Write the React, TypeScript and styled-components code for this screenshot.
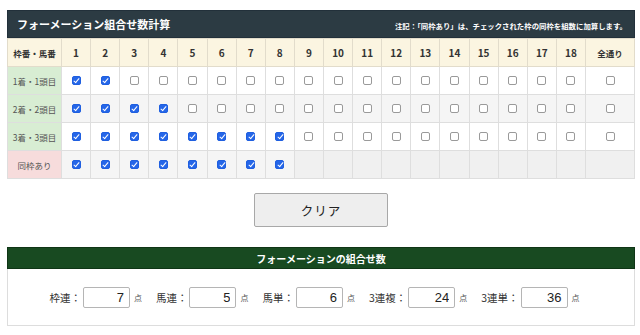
import React, { useState } from 'react';
import styled, { createGlobalStyle } from 'styled-components';

const GlobalStyle = createGlobalStyle`
  html, body {
    margin: 0;
    padding: 0;
    background: #ffffff;
  }
  body {
    font-family: "Noto Sans CJK JP", "Noto Sans", sans-serif;
    color: #333;
  }
`;

const Page = styled.div`
  width: 628px;
  padding: 10px 0 0 7px;
`;

const TitleBar = styled.div`
  height: 28px;
  box-sizing: border-box;
  background: #2c3b43;
  border: 1px solid #22303a;
  display: flex;
  align-items: center;
  justify-content: space-between;
  padding: 0 7px 0 9px;
  color: #fff;
`;

const Title = styled.h1`
  margin: 0;
  font-size: 11px;
  font-weight: 700;
  letter-spacing: 0;
`;

const Note = styled.span`
  font-size: 7.4px;
  font-weight: 700;
  margin-top: 2px;
`;

const Table = styled.table`
  width: 628px;
  border-collapse: collapse;
  table-layout: fixed;
`;

const HeadCell = styled.th<{ $w?: number }>`
  width: ${p => (p.$w ? `${p.$w}px` : 'auto')};
  height: 27px;
  padding: 0;
  background: #fbf5e1;
  border: 1px solid #e2dccb;
  font-size: ${p => (p.$w ? '8.5px' : '10px')};
  font-weight: 700;
  color: #333;
  text-align: center;
`;

const RowLabel = styled.td<{ $tone: 'green' | 'pink' }>`
  height: 27px;
  padding: 0;
  background: ${p => (p.$tone === 'green' ? '#d8edd3' : '#f7dcdc')};
  border: 1px solid #dedede;
  font-size: 8.5px;
  color: #555;
  text-align: center;
`;

const Cell = styled.td<{ $alt: boolean; $empty?: boolean }>`
  padding: 0;
  background: ${p => (p.$empty ? '#f0f0f0' : p.$alt ? '#f5f5f5' : '#ffffff')};
  border: 1px solid #dedede;
  text-align: center;
  vertical-align: middle;
`;

const Check = styled.input.attrs({ type: 'checkbox' })`
  appearance: none;
  -webkit-appearance: none;
  display: block;
  margin: 0 auto;
  width: 9px;
  height: 9px;
  box-sizing: border-box;
  border-radius: 2px;
  border: 1px solid #9a9a9a;
  background: #fff;
  position: relative;
  cursor: pointer;

  &:checked {
    border-color: #1f5fe0;
    background: #2566e8;
  }
  &:checked::after {
    content: '';
    position: absolute;
    left: 2.5px;
    top: 0px;
    width: 2px;
    height: 5px;
    border: solid #fff;
    border-width: 0 1.5px 1.5px 0;
    transform: rotate(40deg);
  }
`;

const ButtonRow = styled.div`
  display: flex;
  justify-content: center;
  padding: 14px 0 0 0;
`;

const ClearButton = styled.button`
  width: 134px;
  height: 34px;
  background: #eeeeee;
  border: 1px solid #a8a8a8;
  border-radius: 2px;
  font-family: "Noto Sans CJK JP", sans-serif;
  font-size: 12.5px;
  color: #222;
  letter-spacing: 1px;
  cursor: pointer;
`;

const ResultBar = styled.div`
  margin-top: 20px;
  height: 22px;
  background: #184a21;
  border: 1px solid #0f3516;
  box-sizing: border-box;
  color: #fff;
  font-size: 10px;
  font-weight: 700;
  display: flex;
  align-items: center;
  justify-content: center;
`;

const ResultBody = styled.div`
  height: 57px;
  box-sizing: border-box;
  border: 1px solid #dddddd;
  border-top: none;
  display: flex;
  align-items: center;
  justify-content: center;
  gap: 14px;
  padding-right: 13px;
`;

const Group = styled.label`
  display: flex;
  align-items: center;
  font-size: 10.5px;
  color: #333;
`;

const Count = styled.input`
  width: 47px;
  height: 21px;
  box-sizing: border-box;
  margin: 0 4px 0 2px;
  border: 1px solid #b5b5b5;
  border-radius: 2px;
  text-align: right;
  padding: 0 5px 0 0;
  font-family: "Liberation Sans", sans-serif;
  font-size: 13px;
  color: #222;
`;

const Unit = styled.span`
  font-size: 8px;
  color: #555;
`;

const cols = Array.from({ length: 18 }, (_, i) => i + 1);

const rows = [
  { label: '1着・1頭目', tone: 'green' as const, n: 2 },
  { label: '2着・2頭目', tone: 'green' as const, n: 4 },
  { label: '3着・3頭目', tone: 'green' as const, n: 8 },
];

const results = [
  { label: '枠連：', value: 7 },
  { label: '馬連：', value: 5 },
  { label: '馬単：', value: 6 },
  { label: '3連複：', value: 24 },
  { label: '3連単：', value: 36 },
];

export default function App() {
  const [grid, setGrid] = useState(() =>
    rows.map(r => cols.map(c => c <= r.n))
  );
  const [same, setSame] = useState(() => cols.slice(0, 8).map(() => true));

  const toggle = (ri: number, ci: number) =>
    setGrid(g => g.map((row, i) => (i === ri ? row.map((v, j) => (j === ci ? !v : v)) : row)));

  return (
    <Page>
      <GlobalStyle />
      <TitleBar>
        <Title>フォーメーション組合せ数計算</Title>
        <Note>注記：「同枠あり」は、チェックされた枠の同枠を組数に加算します。</Note>
      </TitleBar>
      <Table>
        <thead>
          <tr>
            <HeadCell $w={53}>枠番・馬番</HeadCell>
            {cols.map(c => (
              <HeadCell key={c}>{c}</HeadCell>
            ))}
            <HeadCell $w={48}>全通り</HeadCell>
          </tr>
        </thead>
        <tbody>
          {rows.map((r, ri) => (
            <tr key={r.label}>
              <RowLabel $tone={r.tone}>{r.label}</RowLabel>
              {cols.map((c, ci) => (
                <Cell key={c} $alt={ri % 2 === 1}>
                  <Check checked={grid[ri][ci]} onChange={() => toggle(ri, ci)} />
                </Cell>
              ))}
              <Cell $alt={ri % 2 === 1}>
                <Check defaultChecked={false} />
              </Cell>
            </tr>
          ))}
          <tr>
            <RowLabel $tone="pink">同枠あり</RowLabel>
            {cols.map((c, ci) =>
              ci < 8 ? (
                <Cell key={c} $alt>
                  <Check
                    checked={same[ci]}
                    onChange={() => setSame(s => s.map((v, j) => (j === ci ? !v : v)))}
                  />
                </Cell>
              ) : (
                <Cell key={c} $alt $empty />
              )
            )}
            <Cell $alt $empty />
          </tr>
        </tbody>
      </Table>
      <ButtonRow>
        <ClearButton>クリア</ClearButton>
      </ButtonRow>
      <ResultBar>フォーメーションの組合せ数</ResultBar>
      <ResultBody>
        {results.map(r => (
          <Group key={r.label}>
            {r.label}
            <Count readOnly value={r.value} />
            <Unit>点</Unit>
          </Group>
        ))}
      </ResultBody>
    </Page>
  );
}
